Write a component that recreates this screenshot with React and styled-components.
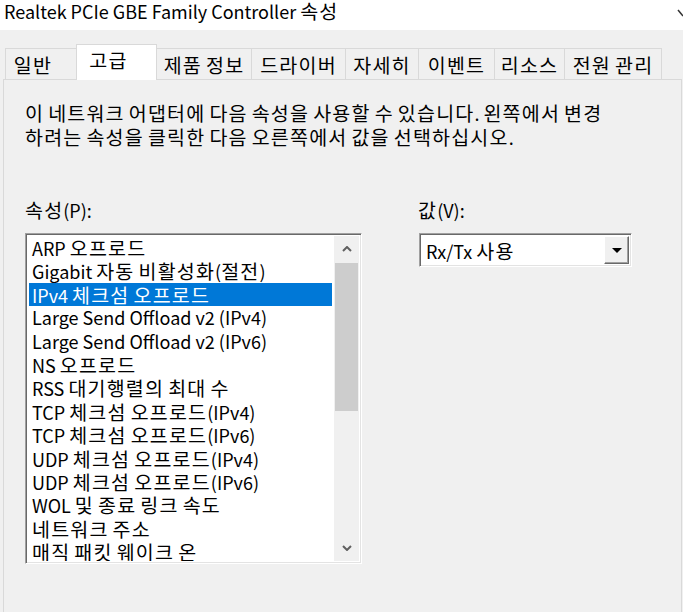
import styled, { createGlobalStyle } from 'styled-components'

const GlobalStyle = createGlobalStyle`
  html, body {
    margin: 0;
    padding: 0;
    background: #f0f0f0;
  }
  body {
    font-family: "Noto Sans CJK KR", "Noto Sans", sans-serif;
    color: #000;
  }
`

const Window = styled.div`
  width: 683px;
  height: 612px;
  overflow: hidden;
  display: flex;
  flex-direction: column;
  background: #f0f0f0;
  font-size: 18px;
`

// Hangul in the reference is set wider than the Latin around it
const Hangul = styled.span`
  font-size: 19.5px;
  letter-spacing: 1.2px;
`

const ko = (text) =>
  text.split(/([\uAC00-\uD7A3]+)/).map((part, i) =>
    /[\uAC00-\uD7A3]/.test(part) ? <Hangul key={i}>{part}</Hangul> : part
  )

const TitleBar = styled.div`
  height: 30px;
  flex-shrink: 0;
  background: #fff;
  display: flex;
  align-items: flex-start;
  justify-content: space-between;
  padding: 0 0 0 4px;
  font-size: 18px;
  line-height: 22px;
  box-sizing: border-box;
`

const CloseMark = styled.svg`
  margin-top: 9px;
`

const TabStrip = styled.div`
  display: flex;
  align-items: flex-end;
  height: 35px;
  margin-top: 14px;
  padding-left: 5px;
  flex-shrink: 0;
`

const Tab = styled.div`
  box-sizing: border-box;
  width: ${(p) => p.$w}px;
  height: ${(p) => (p.$active ? 36 : 31)}px;
  margin-bottom: ${(p) => (p.$active ? -1 : 0)}px;
  margin-right: -1px;
  border: 1px solid #d9d9d9;
  border-bottom: none;
  background: ${(p) => (p.$active ? '#fff' : '#f0f0f0')};
  display: flex;
  align-items: center;
  justify-content: center;
  padding-bottom: ${(p) => (p.$active ? 6 : 0)}px;
  padding-right: ${(p) => p.$shift || 0}px;
  position: relative;
  z-index: ${(p) => (p.$active ? 1 : 0)};
`

const TabLabel = styled.span`
  white-space: nowrap;
`

const Panel = styled.div`
  flex: 1;
  margin: 0 1px 0 3px;
  border: 1px solid #d9d9d9;
  border-bottom: none;
  background: #f0f0f0;
  padding: 21px 20px 0 21px;
`

const Description = styled.p`
  margin: 0;
  line-height: 24px;
  white-space: nowrap;
`

const PropertyGrid = styled.div`
  margin-top: 49px;
  display: grid;
  grid-template-columns: 337px 1fr;
  column-gap: 56px;
`

const Column = styled.div`
  display: flex;
  flex-direction: column;
`

const Label = styled.div`
  line-height: 24px;
  margin-bottom: 11px;
`

const Sunken = styled.div`
  box-sizing: border-box;
  border: 1px solid;
  border-color: #a0a0a0 #fff #fff #a0a0a0;
  box-shadow: inset 1px 1px 0 #696969, inset -1px -1px 0 #e3e3e3;
  background: #fff;
  padding: 2px;
`

const ListBox = styled(Sunken)`
  height: 331px;
  display: flex;
  overflow: hidden;
`

const Items = styled.div`
  flex: 1;
  padding: 0 2px 0 1px;
  overflow: hidden;
`

const Item = styled.div`
  height: 23.4px;
  line-height: 23.4px;
  padding-left: 3px;
  white-space: nowrap;
  background: ${(p) => (p.$selected ? '#0078d7' : 'transparent')};
  color: ${(p) => (p.$selected ? '#fff' : '#000')};
`

const ScrollBar = styled.div`
  width: 25px;
  background: #f0f0f0;
  display: flex;
  flex-direction: column;
`

const ScrollButton = styled.div`
  height: 26px;
  display: flex;
  align-items: center;
  justify-content: center;
`

const Thumb = styled.div`
  height: 148px;
  margin: 1px 1px 0 1px;
  background: #cdcdcd;
`

const Track = styled.div`
  flex: 1;
`

const ComboBox = styled(Sunken)`
  width: 213px;
  height: 34px;
  margin-left: 1px;
  display: flex;
  align-items: stretch;
`

const ComboText = styled.div`
  flex: 1;
  padding-left: 4px;
  line-height: 30px;
  white-space: nowrap;
`

const DropButton = styled.div`
  width: 25px;
  box-sizing: border-box;
  background: #f0f0f0;
  border: 1px solid;
  border-color: #fff #696969 #696969 #fff;
  box-shadow: inset -1px -1px 0 #a0a0a0;
  display: flex;
  align-items: center;
  justify-content: center;
`

const Chevron = ({ down }) => (
  <svg width="10" height="6" viewBox="0 0 10 6">
    <path
      d={down ? 'M1 1 L5 5 L9 1' : 'M1 5 L5 1 L9 5'}
      fill="none"
      stroke="#606060"
      strokeWidth="2"
    />
  </svg>
)

const tabs = [
  ['일반', 72, 16],
  ['고급', 81, 16],
  ['제품 정보', 96],
  ['드라이버', 95],
  ['자세히', 74],
  ['이벤트', 77],
  ['리소스', 71],
  ['전원 관리', 98],
]

const properties = [
  'ARP 오프로드',
  'Gigabit 자동 비활성화(절전)',
  'IPv4 체크섬 오프로드',
  'Large Send Offload v2 (IPv4)',
  'Large Send Offload v2 (IPv6)',
  'NS 오프로드',
  'RSS 대기행렬의 최대 수',
  'TCP 체크섬 오프로드(IPv4)',
  'TCP 체크섬 오프로드(IPv6)',
  'UDP 체크섬 오프로드(IPv4)',
  'UDP 체크섬 오프로드(IPv6)',
  'WOL 및 종료 링크 속도',
  '네트워크 주소',
  '매직 패킷 웨이크 온',
]

export default function App() {
  return (
    <Window>
      <GlobalStyle />
      <TitleBar>
        <span>{ko('Realtek PCIe GBE Family Controller 속성')}</span>
        <CloseMark width="6" height="8" viewBox="0 0 6 8">
          <path d="M1 1 L6 7" stroke="#333" strokeWidth="1.5" />
        </CloseMark>
      </TitleBar>
      <TabStrip>
        {tabs.map(([name, w, shift]) => (
          <Tab key={name} $w={w} $shift={shift} $active={name === '고급'}>
            <TabLabel>{ko(name)}</TabLabel>
          </Tab>
        ))}
      </TabStrip>
      <Panel>
        <Description>
          {ko('이 네트워크 어댑터에 다음 속성을 사용할 수 있습니다. 왼쪽에서 변경')}
          <br />
          {ko('하려는 속성을 클릭한 다음 오른쪽에서 값을 선택하십시오.')}
        </Description>
        <PropertyGrid>
          <Column>
            <Label>{ko('속성(P):')}</Label>
            <ListBox>
              <Items>
                {properties.map((p, i) => (
                  <Item key={p} $selected={i === 2}>
                    {ko(p)}
                  </Item>
                ))}
              </Items>
              <ScrollBar>
                <ScrollButton>
                  <Chevron />
                </ScrollButton>
                <Thumb />
                <Track />
                <ScrollButton>
                  <Chevron down />
                </ScrollButton>
              </ScrollBar>
            </ListBox>
          </Column>
          <Column>
            <Label>{ko('값(V):')}</Label>
            <ComboBox>
              <ComboText>{ko('Rx/Tx 사용')}</ComboText>
              <DropButton>
                <svg width="10" height="5" viewBox="0 0 10 5">
                  <path d="M0 0 L10 0 L5 5 Z" fill="#000" />
                </svg>
              </DropButton>
            </ComboBox>
          </Column>
        </PropertyGrid>
      </Panel>
    </Window>
  )
}
